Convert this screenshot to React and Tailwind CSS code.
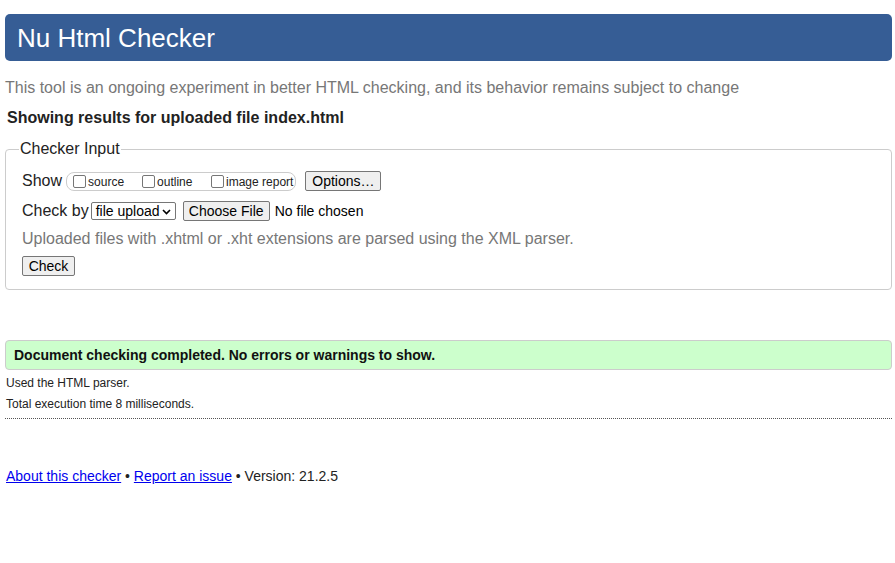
import React from 'react';

const Box = () => (
  <span className="inline-block w-[13px] h-[13px] border border-[#767676] rounded-[2px] bg-white mr-[2px] self-center" />
);

const Btn = ({ children, className = '' }) => (
  <span
    className={`inline-flex items-center justify-center whitespace-nowrap h-[20px] px-[6px] bg-[#efefef] border border-[#767676] rounded-[2px] text-[14px] text-black ${className}`}
  >
    {children}
  </span>
);

export default function App() {
  return (
    <div className="min-h-[563px] bg-white pl-[5px] pr-[3px] font-['Liberation_Sans',Arial,sans-serif] text-[#222]">
      {/* Title bar */}
      <div className="h-[47px] mt-[14px] bg-[#365d95] rounded-[5px] flex items-center pl-[12px]">
        <h1 className="text-[26px] text-white leading-none">Nu Html Checker</h1>
      </div>

      <p className="mt-[18px] text-[16px] leading-[18px] text-[#777]">
        This tool is an ongoing experiment in better HTML checking, and its behavior remains subject to change
      </p>
      <p className="mt-[12px] pl-[2px] text-[16px] leading-[18px] font-bold text-[#222]">
        Showing results for uploaded file index.html
      </p>

      {/* Checker input */}
      <fieldset className="mt-[13px] border border-[#cccccc] rounded-[4px] px-[16px] pb-[13px]">
        <legend className="ml-[-3px] px-[1px] text-[16px] leading-[18px] text-[#222]">Checker Input</legend>

        <div className="mt-[13px] h-[20px] flex items-center">
          <span className="text-[16px] mr-[4px]">Show</span>
          <span className="h-[19px] flex items-center border border-[#cccccc] rounded-[8px] pl-[6px] pr-[2px]">
            <span className="w-[69px] flex items-center">
              <Box />
              <span className="text-[12px] pt-[2px]">source</span>
            </span>
            <span className="w-[69px] flex items-center">
              <Box />
              <span className="text-[12px] pt-[2px]">outline</span>
            </span>
            <span className="flex items-center">
              <Box />
              <span className="text-[12px] pt-[2px]">image report</span>
            </span>
          </span>
          <Btn className="ml-[9px] w-[76px]">Options…</Btn>
        </div>

        <div className="mt-[10px] h-[20px] flex items-center">
          <span className="text-[16px]">Check by</span>
          <span className="ml-[2px] w-[85px] h-[18px] flex items-center justify-between border border-[#767676] rounded-[2px] pl-[4px] pr-[4px] text-[14px] text-black">
            file upload
            <svg width="9" height="6" viewBox="0 0 9 6" className="mt-[1px]">
              <path d="M1 1l3.5 3.5L8 1" fill="none" stroke="#000" strokeWidth="1.6" />
            </svg>
          </span>
          <Btn className="ml-[7px] w-[87px]">Choose File</Btn>
          <span className="ml-[5px] text-[14px] text-black">No file chosen</span>
        </div>

        <p className="mt-[9px] text-[16px] leading-[18px] text-[#777]">
          Uploaded files with .xhtml or .xht extensions are parsed using the XML parser.
        </p>

        <div className="mt-[8px] flex">
          <Btn className="w-[53px]">Check</Btn>
        </div>
      </fieldset>

      {/* Result */}
      <div className="mt-[50px] h-[30px] flex items-center bg-[#ccffcc] border border-[#cccccc] rounded-[4px] pl-[8px]">
        <span className="text-[14px] font-bold text-[#111]">Document checking completed. No errors or warnings to show.</span>
      </div>
      <div className="mt-[3px] text-[12px] leading-[21px] pl-[1px] text-[#222]">
        <p>Used the HTML parser.</p>
        <p>Total execution time 8 milliseconds.</p>
      </div>
      <hr className="mt-[3px] border-0 border-t border-dotted border-[#555]" />

      {/* Footer */}
      <p className="mt-[49px] pl-[1px] text-[14px] leading-[16px] text-[#222]">
        <a href="#" className="text-[#0000ee] underline">About this checker</a>
        {' • '}
        <a href="#" className="text-[#0000ee] underline">Report an issue</a>
        {' • Version: 21.2.5'}
      </p>
    </div>
  );
}
